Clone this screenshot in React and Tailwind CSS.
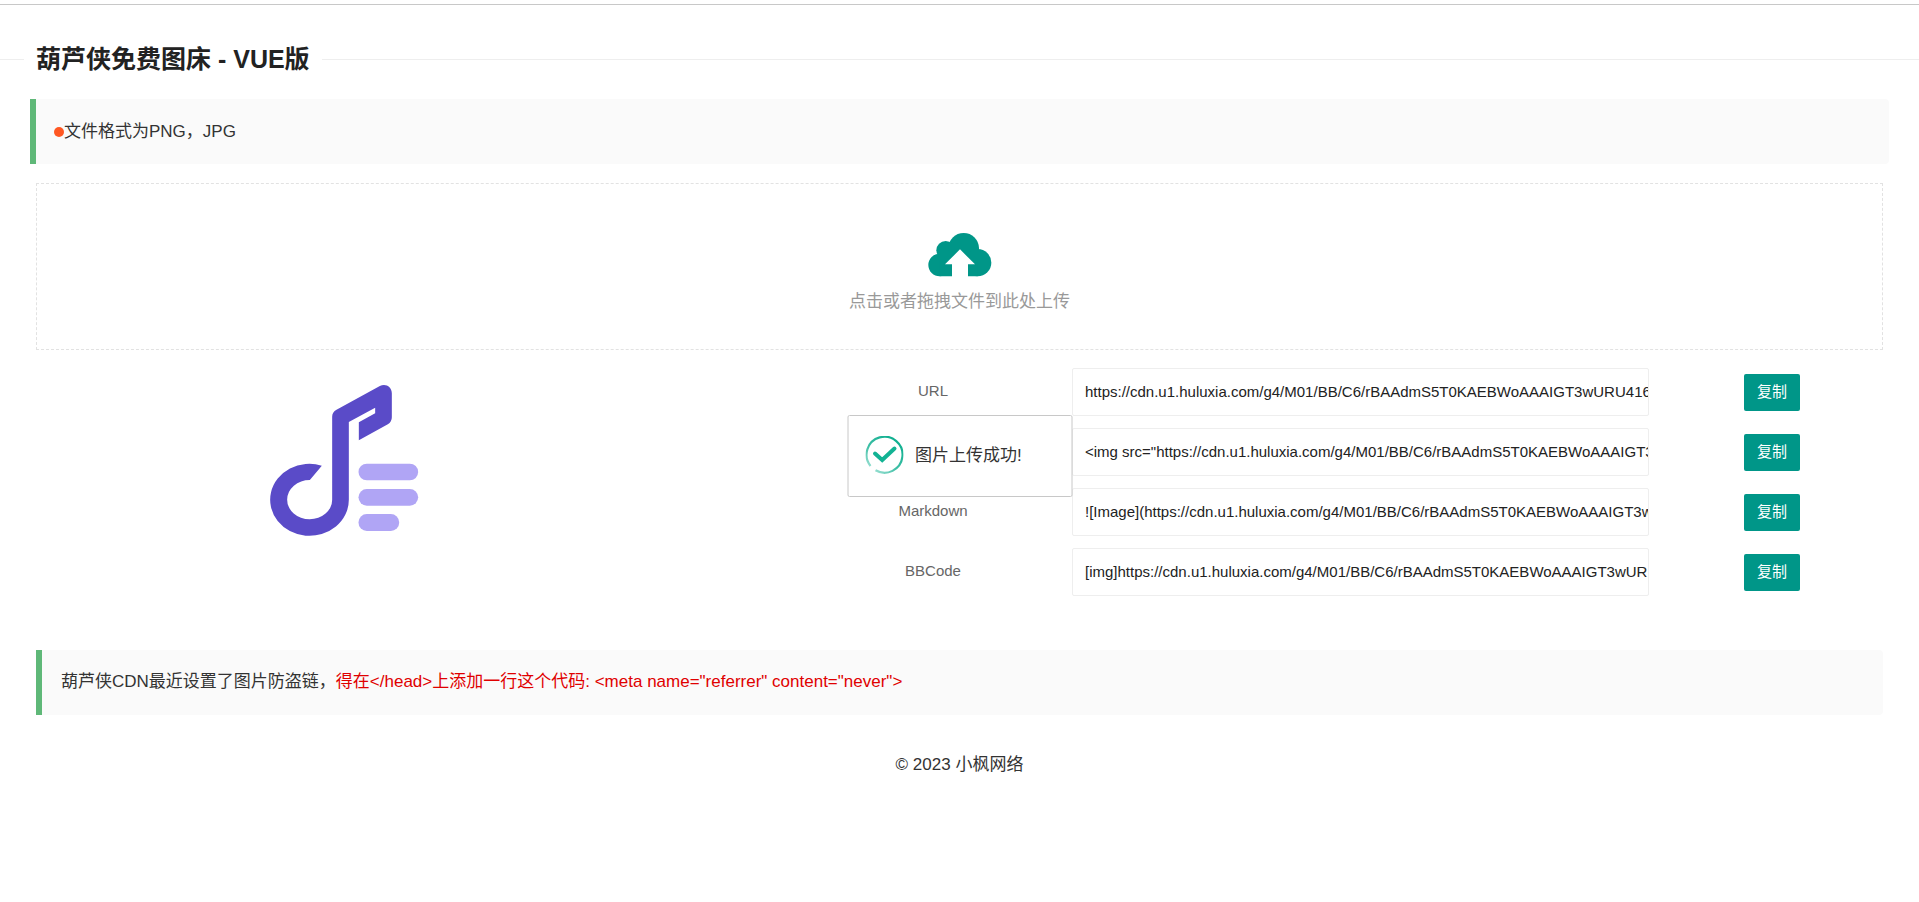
const PATH = "https://cdn.u1.huluxia.com/g4/M01/BB/C6/rBAAdmS5T0KAEBWoAAAIGT3wURU416.png";

const LINKS = [
  { id: "url", name: "URL", label: "URL", value: PATH },
  { id: "html", name: "HTML", label: "", value: `<img src="${PATH}" />` },
  { id: "markdown", name: "Markdown", label: "Markdown", value: `![Image](${PATH})` },
  { id: "bbcode", name: "BBCode", label: "BBCode", value: `[img]${PATH}[/img]` },
];

function CloudUploadIcon() {
  return (
    <svg viewBox="294 188 190 132" className="h-11 w-16" aria-hidden="true">
      <g fill="#009688">
        <circle cx="328" cy="284" r="34" />
        <circle cx="346" cy="240" r="28" />
        <circle cx="400" cy="234" r="46" />
        <circle cx="442" cy="277" r="41" />
        <path d="M328 240h90l24 30v48H328z" />
      </g>
      <path d="M389 237l45 45h-21v38h-48v-38h-21z" fill="#fff" />
    </svg>
  );
}

function MusicImage() {
  return (
    <svg viewBox="90 72 446 456" className="h-[152px] w-[149px]" role="img" aria-label="preview">
      <path
        fill="#5a4bc8"
        d="M245 317A118 108 0 1 0 326 419V186L405 143V160L356 187V241L443 193Q455 186 455 172V100C455 80 436 69 419 78L289 149Q276 156 276 170V419A67.500 59 0 1 1 209 360Z"
      />
      <g fill="#b0a5f5">
        <rect x="355" y="311" width="179" height="50" rx="25" />
        <rect x="355" y="387" width="179" height="50" rx="25" />
        <rect x="355" y="462" width="122" height="51" rx="25" />
      </g>
    </svg>
  );
}

function SuccessIcon() {
  return (
    <svg viewBox="0 1 38 40" className="h-10 w-[38px]" fill="none" aria-hidden="true">
      <defs>
        <linearGradient id="ring" x1="30" y1="6" x2="8" y2="34" gradientUnits="userSpaceOnUse">
          <stop offset="0" stopColor="#12b091" />
          <stop offset="0.6" stopColor="#3fbfa6" />
          <stop offset="1" stopColor="#8fdccd" />
        </linearGradient>
      </defs>
      <path d="M5 31A18 18 0 1 1 10 35.300" stroke="url(#ring)" strokeWidth="2.200" />
      <path d="M9.500 18.500l7.200 6.500L29 13.500" stroke="#12b394" strokeWidth="4" strokeLinecap="round" />
    </svg>
  );
}

export default function App() {
  return (
    <div className="pt-1 font-['Liberation_Sans','Noto_Sans_CJK_SC',sans-serif] text-[17px] text-[#333]">
      <div className="border-t border-[#c8c8c8]" />

      <header className="mt-[35px] flex items-center">
        <span className="w-6 border-t border-[#eee]" />
        <h1 className="px-3 text-[25px] leading-[38px] font-bold text-[#222]">葫芦侠免费图床 - VUE版</h1>
        <span className="flex-1 border-t border-[#eee]" />
      </header>

      <p className="mx-[30px] mt-[21px] flex items-center rounded-r-sm border-l-6 border-[#5fb878] bg-[#fafafa] px-[18px] py-5 leading-[25px]">
        <span className="size-[10px] rounded-full bg-[#ff5722]" />
        文件格式为PNG，JPG
      </p>

      <main className="mx-9 mt-[19px]">
        <button
          type="button"
          className="flex w-full flex-col items-center border border-dashed border-[#e2e2e2] bg-white pt-[49px] pb-[33px] text-[#999]"
        >
          <CloudUploadIcon />
          <span className="mt-[11px] leading-7">点击或者拖拽文件到此处上传</span>
        </button>

        <section className="-mr-3 mt-[18px] grid grid-cols-[616fr_1101fr] gap-[142px]">
          <div className="flex justify-center pt-4">
            <MusicImage />
          </div>
          <div className="flex flex-col gap-3 text-[15px]">
            {LINKS.map(({ id, name, label, value }) => (
              <div key={id} className="grid grid-cols-[278fr_577fr_246fr] items-center">
                <label htmlFor={id} className="pb-0.5 text-center text-[#666]">
                  {label}
                </label>
                <input
                  id={id}
                  aria-label={name}
                  readOnly
                  defaultValue={value}
                  className="h-12 w-full min-w-0 rounded-xs border border-[#eee] bg-white pb-0.5 pl-3 text-[#222] outline-none"
                />
                <button
                  type="button"
                  className="h-[37px] justify-self-center rounded-xs bg-[#009688] px-[13px] text-white"
                >
                  复制
                </button>
              </div>
            ))}
          </div>
        </section>

        <p className="mt-[54px] rounded-r-sm border-l-6 border-[#5fb878] bg-[#fafafa] px-[19px] pt-[19px] pb-[21px] leading-[25px]">
          葫芦侠CDN最近设置了图片防盗链，
          <span className="text-[#e00000]">
            {'得在</head>上添加一行这个代码: <meta name="referrer" content="never">'}
          </span>
        </p>
      </main>

      <footer className="mt-[38px] text-center leading-6">© 2023 小枫网络</footer>

      <div
        role="status"
        className="fixed top-[415px] left-1/2 flex h-[82px] w-[225px] -translate-x-1/2 items-center gap-3 rounded-xs border border-[#c8c8c8] bg-white pl-[17px]"
      >
        <SuccessIcon />
        图片上传成功!
      </div>
    </div>
  );
}
